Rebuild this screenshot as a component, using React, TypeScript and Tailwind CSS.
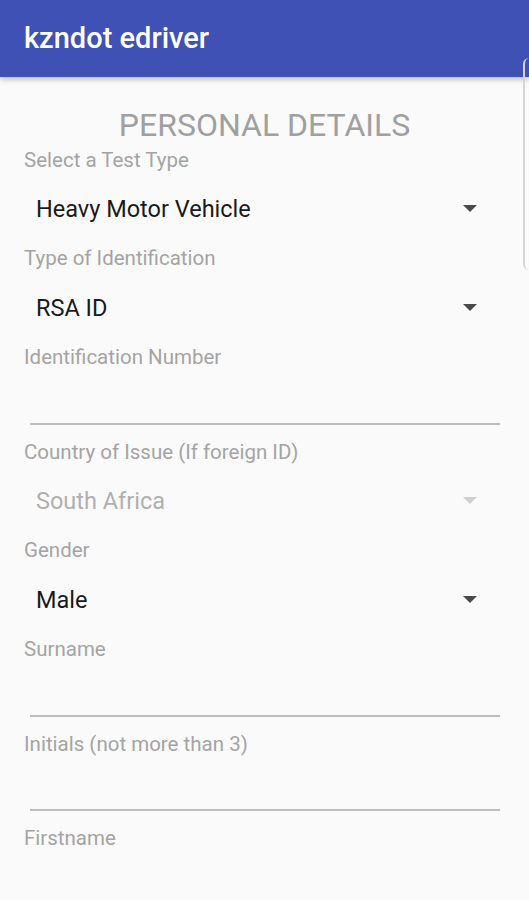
import React from "react";

const font = { fontFamily: "Roboto, 'Noto Sans', sans-serif" };

function Label({ children }: { children: React.ReactNode }) {
  return (
    <div className="h-[24px] pl-[24px] text-[20.5px] leading-[24px] text-[#a4a4a4]">
      {children}
    </div>
  );
}

function Spinner({ value, disabled, h }: { value: string; disabled?: boolean; h: string }) {
  return (
    <div className={`flex ${h} items-center justify-between pl-[36px] pr-[52px]`}>
      <span className={`text-[23.5px] leading-[28px] ${disabled ? "text-[#b0b0b0]" : "text-[#1a1a1a]"}`}>
        {value}
      </span>
      <svg width="14" height="8" viewBox="0 0 14 8">
        <path d="M0 0 L14 0 L7 7 Z" fill={disabled ? "#cfcfcf" : "#4a4a4a"} />
      </svg>
    </div>
  );
}

function EditText({ h }: { h: string }) {
  return (
    <div className={`flex ${h} flex-col justify-end pb-[15px] pl-[30px] pr-[29px]`}>
      <div className="h-[2px] bg-[#bdbdbd]" />
    </div>
  );
}

export default function App() {
  return (
    <div className="relative h-[900px] w-[529px] overflow-hidden bg-[#fafafa]" style={font}>
      <div className="relative z-10 flex h-[77px] items-center bg-[#3f51b5] pl-[24px] shadow-[0_2px_6px_rgba(0,0,0,0.28)]">
        <span className="text-[29px] font-medium leading-none text-white">kzndot edriver</span>
      </div>
      <div className="pt-[29px]">
        <div className="h-[42px] text-center text-[32px] leading-[38px] text-[#a0a0a0]">
          PERSONAL DETAILS
        </div>
        <Label>Select a Test Type</Label>
        <Spinner value="Heavy Motor Vehicle" h="h-[74px]" />
        <Label>Type of Identification</Label>
        <Spinner value="RSA ID" h="h-[75px]" />
        <Label>Identification Number</Label>
        <EditText h="h-[71px]" />
        <Label>Country of Issue (If foreign ID)</Label>
        <Spinner value="South Africa" disabled h="h-[74px]" />
        <Label>Gender</Label>
        <Spinner value="Male" h="h-[75px]" />
        <Label>Surname</Label>
        <EditText h="h-[71px]" />
        <Label>Initials (not more than 3)</Label>
        <EditText h="h-[70px]" />
        <Label>Firstname</Label>
      </div>
      <div className="absolute right-0 top-[58px] z-20 h-[212px] w-[6px] rounded-l-[10px] border-l-2 border-[#d6d6d6]" />
    </div>
  );
}
